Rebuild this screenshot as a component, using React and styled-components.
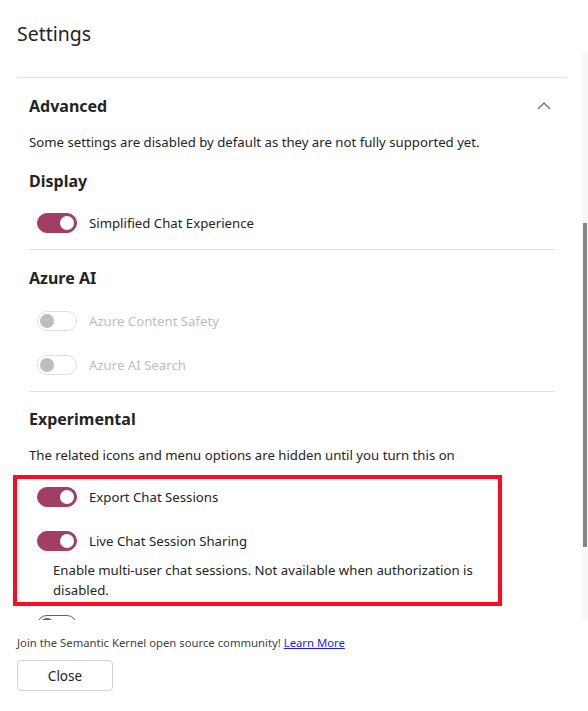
import React from "react";
import styled, { createGlobalStyle } from "styled-components";

const GlobalStyle = createGlobalStyle`
  html, body {
    margin: 0;
    padding: 0;
    background: #ffffff;
  }
  body {
    font-family: "Noto Sans", "Open Sans", sans-serif;
    color: #242424;
  }
`;

const Surface = styled.div`
  width: 588px;
  height: 711px;
  display: flex;
  flex-direction: column;
  overflow: hidden;
`;

const DialogTitle = styled.h2`
  margin: 20px 0 0 17px;
  font-size: 19.5px;
  line-height: 28px;
  font-weight: 400;
  height: 32px;
`;

const ScrollArea = styled.div`
  display: flex;
  flex-direction: row;
  height: 568px;
  overflow: hidden;
`;

const ScrollContent = styled.div`
  flex: 1;
  padding: 25px 15px 0 17px;
  overflow: hidden;
`;

const ScrollTrack = styled.div`
  width: 6px;
  background: #f8f8f8;
  display: flex;
  flex-direction: column;
`;

const ScrollThumb = styled.div`
  margin: 171px 1px 0 1px;
  height: 324px;
  background: #858585;
`;

const Divider = styled.div`
  height: 1px;
  background: #e0e0e0;
  margin-top: ${(p) => p.$top || 0}px;
`;

const AccordionHeader = styled.div`
  display: flex;
  align-items: center;
  justify-content: space-between;
  padding: 17px 16px 15px 12px;
`;

const AccordionTitle = styled.span`
  font-size: 16px;
  line-height: 22px;
  font-weight: 700;
`;

const Panel = styled.div`
  padding: 0 12px;
`;

const Description = styled.p`
  margin: ${(p) => p.$top || 0}px 0 0 0;
  font-size: 13.2px;
  line-height: 20px;
  color: #242424;
`;

const SectionTitle = styled.h3`
  margin: ${(p) => p.$top || 0}px 0 0 0;
  font-size: 16px;
  line-height: 22px;
  font-weight: 700;
`;

const Row = styled.div`
  display: flex;
  align-items: center;
  height: 44px;
  padding-left: 8px;
  margin-top: ${(p) => p.$top || 0}px;
`;

const Track = styled.span`
  box-sizing: border-box;
  width: 40px;
  height: 20px;
  border-radius: 10px;
  display: flex;
  align-items: center;
  padding: 0 2px;
  justify-content: ${(p) => (p.$on ? "flex-end" : "flex-start")};
  background: ${(p) => (p.$on ? "#a23e66" : "#ffffff")};
  border: 1px solid
    ${(p) => (p.$on ? "#a23e66" : p.$disabled ? "#e0e0e0" : "#616161")};
`;

const Thumb = styled.span`
  width: 14px;
  height: 14px;
  border-radius: 50%;
  background: ${(p) => (p.$on ? "#ffffff" : p.$disabled ? "#bdbdbd" : "#616161")};
`;

const Label = styled.span`
  margin-left: 12px;
  font-size: 13.2px;
  line-height: 20px;
  color: ${(p) => (p.$disabled ? "#bdbdbd" : "#242424")};
`;

const Highlight = styled.div`
  margin: 10px 53px 0 -16px;
  padding: 0 0 2px 12px;
  border: 4px solid #ff0a22;
`;

const HighlightStack = styled.div`
  margin-top: -4px;
`;

const SubNote = styled.p`
  margin: -3px 0 0 24px;
  font-size: 13.2px;
  line-height: 20px;
  color: #242424;
`;

const Footer = styled.div`
  padding: 15px 17px 0 17px;
  display: flex;
  flex-direction: column;
  align-items: flex-start;
`;

const FooterText = styled.div`
  font-size: 11.3px;
  line-height: 16px;
  color: #424242;
`;

const Link = styled.a`
  color: #1a1aff;
  text-decoration: underline;
`;

const Button = styled.button`
  margin-top: 9px;
  min-width: 96px;
  height: 31px;
  border: 1px solid #d1d1d1;
  border-radius: 4px;
  background: #ffffff;
  font-family: inherit;
  font-size: 13.5px;
  font-weight: 400;
  color: #242424;
`;

const Toggle = ({ on, disabled, label, top }) => (
  <Row $top={top}>
    <Track $on={on} $disabled={disabled}>
      <Thumb $on={on} $disabled={disabled} />
    </Track>
    {label && <Label $disabled={disabled}>{label}</Label>}
  </Row>
);

const ChevronUp = () => (
  <svg width="14" height="14" viewBox="0 0 14 14" fill="none">
    <path d="M1 10 L7 4 L13 10" stroke="#616161" strokeWidth="1.2" />
  </svg>
);

export default function App() {
  return (
    <>
      <GlobalStyle />
      <Surface>
        <DialogTitle>Settings</DialogTitle>
        <ScrollArea>
          <ScrollContent>
            <Divider />
            <AccordionHeader>
              <AccordionTitle>Advanced</AccordionTitle>
              <ChevronUp />
            </AccordionHeader>
            <Panel>
              <Description>
                Some settings are disabled by default as they are not fully supported yet.
              </Description>

              <SectionTitle $top={18}>Display</SectionTitle>
              <Toggle top={9} on label="Simplified Chat Experience" />
              <Divider $top={4} />

              <SectionTitle $top={17}>Azure AI</SectionTitle>
              <Toggle top={10} disabled label="Azure Content Safety" />
              <Toggle disabled label="Azure AI Search" />
              <Divider $top={4} />

              <SectionTitle $top={16}>Experimental</SectionTitle>
              <Description $top={15}>
                The related icons and menu options are hidden until you turn this on
              </Description>
              <Highlight>
                <HighlightStack>
                  <Toggle on label="Export Chat Sessions" />
                  <Toggle on label="Live Chat Session Sharing" />
                  <SubNote>
                    Enable multi-user chat sessions. Not available when authorization is
                    disabled.
                  </SubNote>
                </HighlightStack>
              </Highlight>
              <Toggle top={-3} />
            </Panel>
          </ScrollContent>
          <ScrollTrack>
            <ScrollThumb />
          </ScrollTrack>
        </ScrollArea>
        <Footer>
          <FooterText>
            Join the Semantic Kernel open source community!{" "}
            <Link href="#">Learn More</Link>
          </FooterText>
          <Button>Close</Button>
        </Footer>
      </Surface>
    </>
  );
}
